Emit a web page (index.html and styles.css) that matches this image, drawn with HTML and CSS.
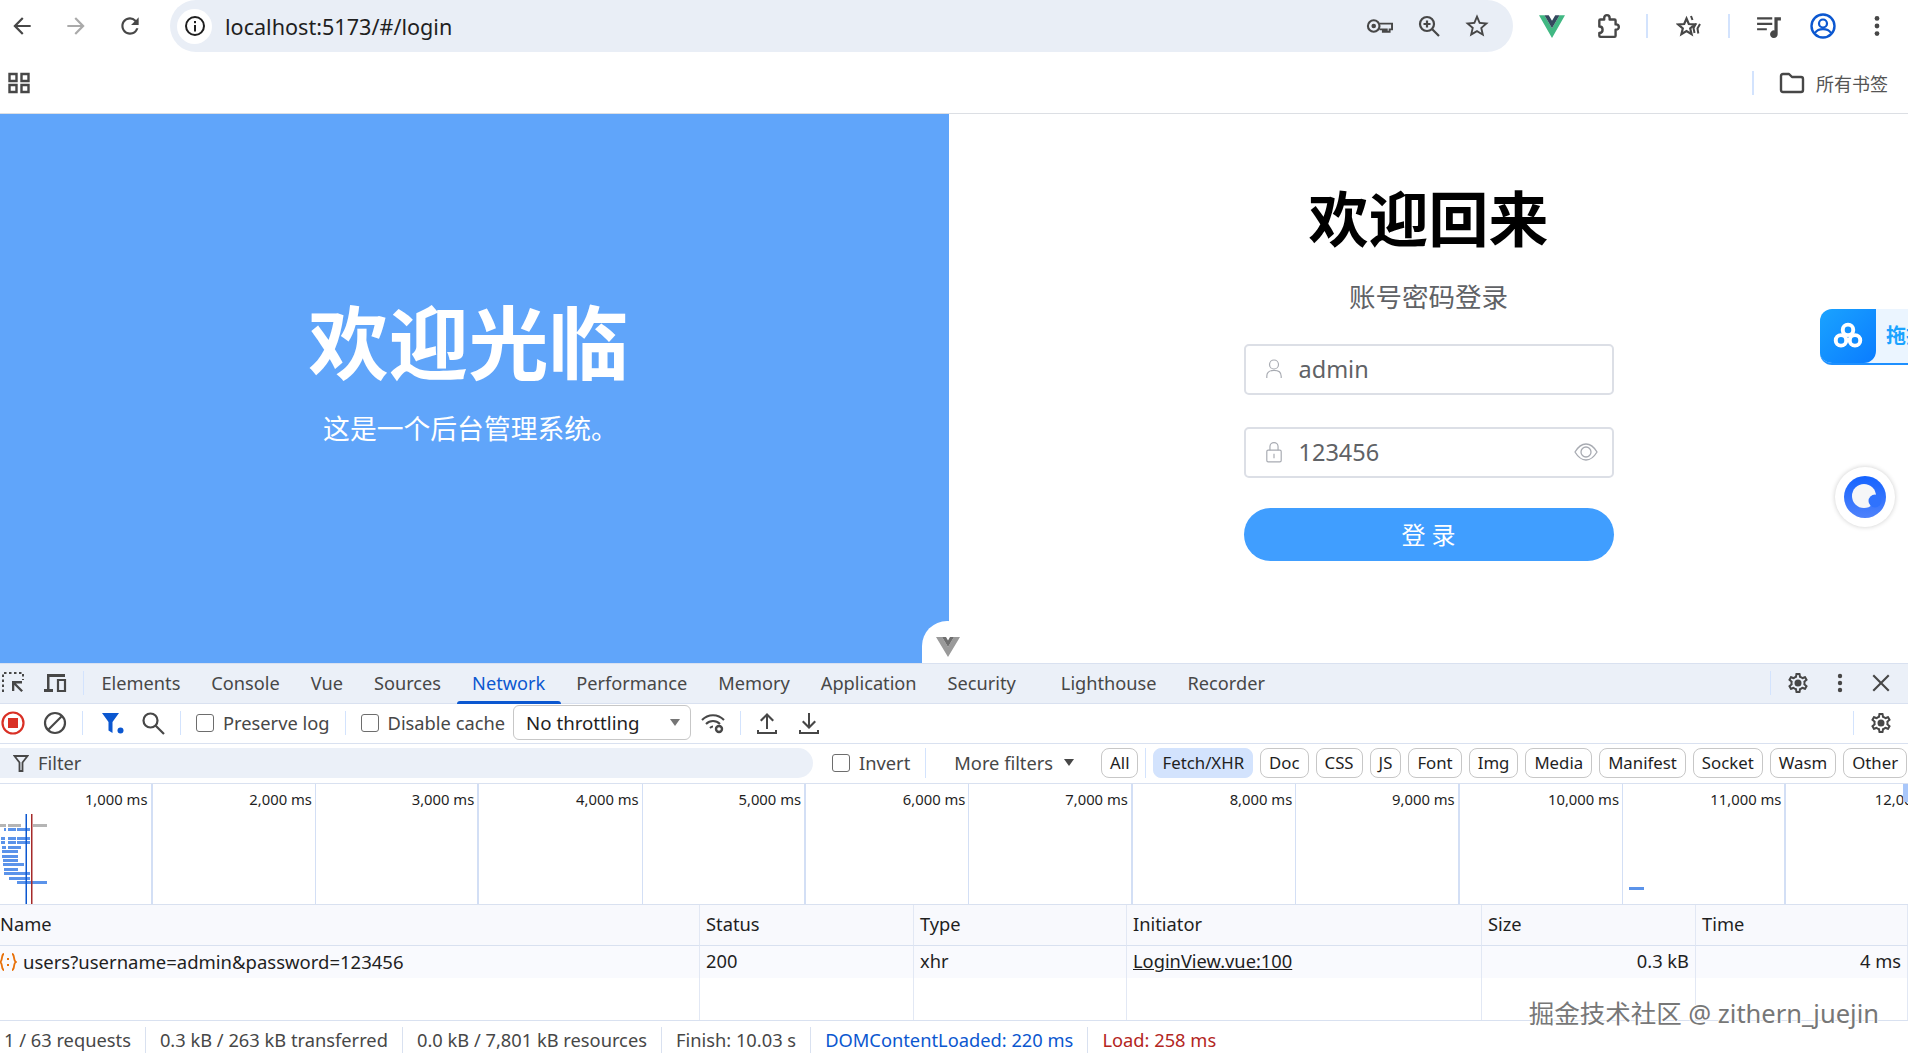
FILE: index.html
```html
<!DOCTYPE html>
<html lang="zh">
<head>
  <meta charset="UTF-8" />
  <title>localhost:5173/#/login</title>
  <link rel="stylesheet" href="styles.css" />
</head>
<body>

<svg class="sprites" width="0" height="0">
  <symbol id="gear" viewBox="0 0 24 24"><path d="M19.43 12.98c.04-.32.07-.64.07-.98 0-.34-.03-.66-.07-.98l2.11-1.65c.19-.15.24-.42.12-.64l-2-3.46a.5.5 0 0 0-.61-.22l-2.49 1c-.52-.4-1.08-.73-1.69-.98l-.38-2.65A.488.488 0 0 0 14 2h-4c-.25 0-.46.18-.49.42l-.38 2.65c-.61.25-1.17.59-1.69.98l-2.49-1a.566.566 0 0 0-.18-.03c-.17 0-.34.09-.43.25l-2 3.46c-.13.22-.07.49.12.64l2.11 1.65c-.04.32-.07.65-.07.98 0 .33.03.66.07.98l-2.11 1.65c-.19.15-.24.42-.12.64l2 3.46a.5.5 0 0 0 .61.22l2.49-1c.52.4 1.08.73 1.69.98l.38 2.65c.03.24.24.42.49.42h4c.25 0 .46-.18.49-.42l.38-2.65c.61-.25 1.17-.59 1.69-.98l2.49 1c.06.02.12.03.18.03.17 0 .34-.09.43-.25l2-3.46c.12-.22.07-.49-.12-.64l-2.11-1.65zm-1.98-1.71c.04.31.05.52.05.73 0 .21-.02.43-.05.73l-.14 1.13.89.7 1.08.84-.7 1.21-1.27-.51-1.04-.42-.9.68c-.43.32-.84.56-1.25.73l-1.06.43-.16 1.13-.2 1.35h-1.4l-.19-1.35-.16-1.13-1.06-.43c-.43-.18-.83-.41-1.23-.71l-.91-.7-1.06.43-1.27.51-.7-1.21 1.08-.84.89-.7-.14-1.13c-.03-.31-.05-.54-.05-.74s.02-.43.05-.73l.14-1.13-.89-.7-1.08-.84.7-1.21 1.27.51 1.04.42.9-.68c.43-.32.84-.56 1.25-.73l1.06-.43.16-1.13.2-1.35h1.39l.19 1.35.16 1.13 1.06.43c.43.18.83.41 1.23.71l.91.7 1.06-.43 1.27-.51.7 1.21-1.07.85-.89.7.14 1.13zM12 8.5a3.5 3.5 0 1 0 0 7 3.5 3.5 0 0 0 0-7z"/></symbol>
  <symbol id="dots" viewBox="0 0 24 24"><circle cx="12" cy="5" r="2.2"/><circle cx="12" cy="12" r="2.2"/><circle cx="12" cy="19" r="2.2"/></symbol>
</svg>

<!-- browser chrome -->
<header class="toolbar">
  <svg class="tb-icon" viewBox="0 0 24 24"><path d="M20 11H7.83l5.59-5.59L12 4l-8 8 8 8 1.41-1.41L7.83 13H20v-2z"/></svg>
  <svg class="tb-icon muted" viewBox="0 0 24 24"><path d="M12 4l-1.41 1.41L16.17 11H4v2h12.17l-5.58 5.59L12 20l8-8z"/></svg>
  <svg class="tb-icon" viewBox="0 0 24 24"><path d="M17.65 6.35A7.958 7.958 0 0 0 12 4c-4.42 0-7.99 3.58-7.99 8s3.57 8 7.99 8c3.73 0 6.84-2.55 7.73-6h-2.08A5.99 5.99 0 0 1 12 18c-3.31 0-6-2.69-6-6s2.69-6 6-6c1.66 0 3.14.69 4.22 1.78L13 11h7V4l-2.35 2.35z"/></svg>

  <div class="omnibox">
    <span class="site-info">
      <svg width="24" height="24" viewBox="0 0 24 24"><circle cx="12" cy="12" r="9" fill="none" stroke="#1f1f1f" stroke-width="2"/><rect x="11" y="11" width="2" height="6.5" fill="#1f1f1f"/><rect x="11" y="7" width="2" height="2.2" fill="#1f1f1f"/></svg>
    </span>
    <span class="url">localhost:5173/#/login</span>
    <svg class="omni-icon" viewBox="0 0 28 24"><circle cx="8" cy="12" r="6" fill="none" stroke="#474747" stroke-width="2.2"/><circle cx="8" cy="12" r="2.4" fill="#474747"/><path d="M14 9.5h13v6h-2.5v2.5h-3v-2.5h-2v2.500h-2v-2.500H14" fill="none" stroke="#474747" stroke-width="2"/></svg>
    <svg class="omni-icon zoom" viewBox="0 0 24 24"><circle cx="10" cy="10" r="7" fill="none" stroke="#474747" stroke-width="2.200"/><path d="M15 15l7 7M10 6.500v7M6.500 10h7" stroke="#474747" stroke-width="2.200"/></svg>
    <svg class="omni-icon star" viewBox="0 0 24 24"><path d="M22 9.24l-7.19-.62L12 2 9.19 8.63 2 9.24l5.46 4.73L5.82 21 12 17.27 18.18 21l-1.63-7.03L22 9.24zM12 15.4l-3.76 2.27 1-4.28-3.32-2.88 4.38-.38L12 6.1l1.71 4.04 4.38.38-3.32 2.88 1 4.28L12 15.4z"/></svg>
  </div>

  <svg class="tb-icon vue" viewBox="0 0 24 24"><path fill="#41b883" d="M0 2h5l7 12 7-12h5L12 23z"/><path fill="#34495e" d="M5 2h4l3 5.200L15 2h4l-7 12z"/></svg>
  <svg class="tb-icon puzzle" viewBox="0 0 24 24"><path fill="none" stroke="#474747" stroke-width="2.200" stroke-linejoin="round" d="M8.500 6V4.500a2.500 2.500 0 0 1 5 0V6H18c.6 0 1 .4 1 1v3.500h.5a2.500 2.500 0 0 1 0 5H19V21c0 .6-.4 1-1 1H5c-.6 0-1-.4-1-1v-2.500c2 0 3-1.300 3-3s-1-3-3-3V7c0-.6.4-1 1-1z"/></svg>
  <span class="tb-sep first"></span>
  <svg class="tb-icon star2" viewBox="0 0 26 24"><path fill="none" stroke="#474747" stroke-width="2.200" d="M10.500 4.500l2.300 5.500 5.900.5-4.500 3.900 1.400 5.800-5.100-3.100-5.100 3.100 1.400-5.800-4.500-3.900 5.900-.5z"/><path fill="none" stroke="#474747" stroke-width="2" d="M15 2l1.500 4M20 9.500l-2.500 4.500 1 5M24 10l-2.500 4.500.8 5"/></svg>
  <span class="tb-sep"></span>
  <svg class="tb-icon media" viewBox="0 0 24 24"><path d="M1 4h14v2H1zM1 9h14v2H1zM1 14h9v2H1zM17 4h6v3h-3v12.500a3.500 3.500 0 1 1-3-3.450z"/></svg>
  <svg class="tb-icon profile" viewBox="0 0 26 26"><circle cx="13" cy="13" r="11.500" fill="none" stroke="#0b57d0" stroke-width="2.400"/><circle cx="13" cy="10.500" r="4" fill="none" stroke="#0b57d0" stroke-width="2.200"/><path d="M5 20c2-3 5-3.800 8-3.800s6 .8 8 3.800" fill="none" stroke="#0b57d0" stroke-width="2.200"/></svg>
  <svg class="tb-icon kebab"><use href="#dots"/></svg>
</header>

<div class="bookmarks">
  <svg class="apps-icon" viewBox="0 0 22 22"><path fill="none" stroke="#474747" stroke-width="2.400" d="M1.500 2h7v7h-7zM13.500 2h7v7h-7zM1.500 13h7v7h-7zM13.500 13h7v7h-7z"/></svg>
  <div class="all-bookmarks">
    <span class="tb-sep"></span>
    <svg class="folder" viewBox="0 0 26 22"><path fill="none" stroke="#474747" stroke-width="2.400" stroke-linejoin="round" d="M2 4c0-1 .7-2 2-2h6l3 3h9c1.300 0 2 1 2 2v11c0 1-.7 2-2 2H4c-1.300 0-2-1-2-2z"/></svg>
    <span>所有书签</span>
  </div>
</div>

<!-- the login page -->
<main class="page">
  <section class="welcome">
    <h1>欢迎光临</h1>
    <p>这是一个后台管理系统。</p>
  </section>

  <section class="login">
    <h2>欢迎回来</h2>
    <p class="login-sub">账号密码登录</p>
    <form class="login-form">
      <label class="field">
        <svg class="field-icon" viewBox="0 0 20 24"><circle cx="10" cy="7" r="5" fill="none" stroke="#a8abb2" stroke-width="1.300"/><path d="M2 22v-2c0-4 3-6.500 8-6.500s8 2.500 8 6.500v2" fill="none" stroke="#a8abb2" stroke-width="1.300"/></svg>
        <input type="text" value="admin" />
      </label>
      <label class="field">
        <svg class="field-icon" viewBox="0 0 20 24"><rect x="2" y="10" width="16" height="13" rx="1.500" fill="none" stroke="#a8abb2" stroke-width="1.300"/><path d="M5.500 10V6a4.500 4.500 0 0 1 9 0v4M10 14v5" fill="none" stroke="#a8abb2" stroke-width="1.300"/></svg>
        <input type="text" value="123456" />
        <svg class="eye-icon" viewBox="0 0 24 20"><path d="M1 10c3-5 7-8 11-8s8 3 11 8c-3 5-7 8-11 8s-8-3-11-8z" fill="none" stroke="#a8abb2" stroke-width="1.300"/><circle cx="12" cy="10" r="5" fill="none" stroke="#a8abb2" stroke-width="1.300"/></svg>
      </label>
      <button type="button" class="login-btn">登 录</button>
    </form>
  </section>

  <!-- things injected by extensions -->
  <div class="vue-tab">
    <svg width="24" height="20" viewBox="0 0 24 20"><path fill="#9a9a9a" d="M0 0h6l6 10 6-10h6L12 20z"/><path fill="#6e6e6e" d="M6 0h4l2 3.500L14 0h4l-6 10z"/></svg>
  </div>
  <div class="cloud-widget">
    <span class="cloud-icon">
      <svg width="30" height="28" viewBox="0 0 34 32"><g fill="none" stroke="#fff" stroke-width="4.500"><circle cx="17" cy="9" r="6"/><circle cx="9" cy="21" r="6"/><circle cx="25" cy="21" r="6"/></g></svg>
    </span>
    <span class="cloud-text">拖拽上传</span>
  </div>
  <div class="round-widget">
    <svg width="42" height="42" viewBox="0 0 42 42"><defs><linearGradient id="ring" x1="0" y1="0" x2="0" y2="1"><stop offset="0" stop-color="#1463ff"/><stop offset="1" stop-color="#4f82fb"/></linearGradient></defs><circle cx="21" cy="21" r="21" fill="url(#ring)"/><circle cx="20" cy="20" r="12" fill="#f5f6f8"/><circle cx="31" cy="25" r="6.500" fill="#2f72fd"/></svg>
  </div>
</main>

<!-- devtools -->
<section class="devtools">
  <div class="dt-tabs">
    <svg class="dt-icon first" viewBox="0 0 24 24"><path fill="none" stroke="#474747" stroke-width="2" stroke-dasharray="2.500 2.500" d="M2 21V2h20v7"/><path fill="#474747" d="M11 10h10v2.400h-6l7 7-1.700 1.700-7-7V20H11z"/></svg>
    <svg class="dt-icon" viewBox="0 0 24 24"><path fill="#474747" d="M4 3h18v3H6.500v12H10v3H1v-3h3z"/><path fill="none" stroke="#474747" stroke-width="2.200" d="M15 9h7v11h-7z"/></svg>
    <span class="dt-sep"></span>
    <nav class="dt-tablist">
      <a>Elements</a>
      <a>Console</a>
      <a>Vue</a>
      <a>Sources</a>
      <a class="active">Network</a>
      <a>Performance</a>
      <a>Memory</a>
      <a>Application</a>
      <a class="wide">Security</a>
      <a>Lighthouse</a>
      <a>Recorder</a>
    </nav>
    <span class="dt-sep push"></span>
    <svg class="dt-icon gear"><use href="#gear"/></svg>
    <svg class="dt-icon kebab"><use href="#dots"/></svg>
    <svg class="dt-icon close" viewBox="0 0 24 24"><path d="M5 3.500L3.500 5l7 7-7 7L5 20.500l7-7 7 7 1.500-1.500-7-7 7-7L19 3.500l-7 7z"/></svg>
  </div>

  <div class="dt-toolbar">
    <svg class="dt-icon record" viewBox="0 0 24 24"><circle cx="12" cy="12" r="10.500" fill="none" stroke="#d93025" stroke-width="2.200"/><rect x="7" y="7" width="10" height="10" fill="#d93025"/></svg>
    <svg class="dt-icon clear" viewBox="0 0 24 24"><circle cx="12" cy="12" r="10" fill="none" stroke="#474747" stroke-width="2.200"/><path d="M5 19L19 5" stroke="#474747" stroke-width="2.200"/></svg>
    <span class="dt-sep"></span>
    <svg class="dt-icon funnel" viewBox="0 0 24 24"><path fill="#0b57d0" d="M1 2h17l-6.500 9v11l-4-2.500V11z"/><circle cx="19.500" cy="19.500" r="3" fill="#0b57d0"/></svg>
    <svg class="dt-icon search" viewBox="0 0 24 24"><circle cx="9.500" cy="9.500" r="7" fill="none" stroke="#474747" stroke-width="2.200"/><path d="M14.500 14.500L23 23" stroke="#474747" stroke-width="2.200"/></svg>
    <span class="dt-sep"></span>
    <label class="check preserve"><input type="checkbox" />Preserve log</label>
    <span class="dt-sep"></span>
    <label class="check disable"><input type="checkbox" />Disable cache</label>
    <div class="throttle"><span>No throttling</span><i class="caret"></i></div>
    <svg class="dt-icon wifi" viewBox="0 0 24 24"><path fill="none" stroke="#474747" stroke-width="2" d="M1 9c6-6.500 16-6.500 22 0M5 13c4-4 10-4 14 0M9 17c1-1 2-1.500 3-1.500"/><circle cx="18" cy="18" r="3" fill="none" stroke="#474747" stroke-width="2.400"/></svg>
    <span class="dt-sep"></span>
    <svg class="dt-icon upload" viewBox="0 0 24 24"><path fill="#474747" d="M12 2l7 7-1.500 1.500L13 6v12h-2V6l-4.500 4.500L5 9zM2 19h2v2h16v-2h2v4H2z"/></svg>
    <svg class="dt-icon download" viewBox="0 0 24 24"><path fill="#474747" d="M11 2h2v12l4.500-4.500L19 11l-7 7-7-7 1.500-1.500L11 14zM2 19h2v2h16v-2h2v4H2z"/></svg>
    <span class="dt-sep push"></span>
    <svg class="dt-icon gear"><use href="#gear"/></svg>
  </div>

  <div class="dt-filters">
    <div class="filter-box">
      <svg width="16" height="18" viewBox="0 0 16 18"><path fill="none" stroke="#474747" stroke-width="1.800" d="M1.500 2h13L9.500 8.500V17h-3V8.500z"/></svg>
      <span>Filter</span>
    </div>
    <label class="check invert"><input type="checkbox" />Invert</label>
    <span class="dt-sep short"></span>
    <span class="more-filters">More filters<i class="caret dark"></i></span>
    <div class="pills">
      <span class="pill">All</span>
      <span class="dt-sep short"></span>
      <span class="pill selected">Fetch/XHR</span>
      <span class="pill">Doc</span>
      <span class="pill">CSS</span>
      <span class="pill">JS</span>
      <span class="pill">Font</span>
      <span class="pill">Img</span>
      <span class="pill">Media</span>
      <span class="pill">Manifest</span>
      <span class="pill">Socket</span>
      <span class="pill">Wasm</span>
      <span class="pill">Other</span>
    </div>
  </div>

  <div class="overview">
    <div class="tick">1,000 ms</div>
    <div class="tick">2,000 ms</div>
    <div class="tick">3,000 ms</div>
    <div class="tick">4,000 ms</div>
    <div class="tick">5,000 ms</div>
    <div class="tick">6,000 ms</div>
    <div class="tick">7,000 ms</div>
    <div class="tick">8,000 ms</div>
    <div class="tick">9,000 ms</div>
    <div class="tick">10,000 ms</div>
    <div class="tick">11,000 ms</div>
    <div class="tick">12,000 ms</div>
    <div class="tick">13,000 ms</div>
    <!-- requests drawn on the timeline -->
    <svg class="waterfall" width="1908" height="120" viewBox="0 0 1908 120">
      <g fill="#b5b5b5"><rect x="0" y="40" width="6" height="3"/><rect x="8" y="40" width="13" height="3"/><rect x="33" y="40" width="14" height="3"/></g>
      <g fill="#5b93ea">
        <rect x="4" y="44" width="2" height="3"/><rect x="8" y="44" width="8" height="3"/><rect x="17" y="44" width="13" height="3"/>
        <rect x="1" y="53" width="4" height="3"/><rect x="8" y="53" width="8" height="3"/><rect x="17" y="53" width="13" height="3"/>
        <rect x="1" y="57" width="4" height="3"/><rect x="8" y="57" width="8" height="3"/><rect x="17" y="57" width="13" height="3"/>
        <rect x="2" y="62" width="4" height="3"/><rect x="8" y="62" width="13" height="3"/>
        <rect x="2" y="66" width="16" height="3"/>
        <rect x="2" y="71" width="16" height="3"/><rect x="3" y="75" width="15" height="3"/>
        <rect x="3" y="79" width="21" height="3"/><rect x="4" y="84" width="14" height="3"/>
        <rect x="4" y="88" width="26" height="3"/><rect x="9" y="93" width="21" height="3"/>
        <rect x="17" y="97" width="30" height="3"/>
        <rect x="1629" y="103" width="15" height="3"/>
      </g>
      <rect x="25.500" y="30" width="1.500" height="90" fill="#0b57d0"/>
      <rect x="31" y="30" width="1.500" height="90" fill="#a52a2a"/>
      <rect x="1903" y="0" width="5" height="18" fill="#a9c7fa"/>
    </svg>
  </div>

  <div class="net-table">
    <div class="th">Name</div><div class="th">Status</div><div class="th">Type</div><div class="th">Initiator</div><div class="th">Size</div><div class="th">Time</div>
    <div class="td name">
      <svg width="17" height="20" viewBox="0 0 17 20"><path fill="none" stroke="#e8710a" stroke-width="1.800" d="M4 2C1 2 3 9 0 10c3 1 1 8 4 8M12 2c3 0 1 7 4 8-3 1-1 8-4 8"/><path stroke="#e8710a" stroke-width="2" d="M8 6v2M8 12v2"/></svg>
      users?username=admin&amp;password=123456
    </div>
    <div class="td">200</div><div class="td">xhr</div>
    <div class="td"><a class="link">LoginView.vue:100</a></div>
    <div class="td num">0.3 kB</div><div class="td num">4 ms</div>
    <div class="filler"></div><div class="filler"></div><div class="filler"></div><div class="filler"></div><div class="filler"></div><div class="filler"></div>
  </div>

  <footer class="statusbar">
    <span>1 / 63 requests</span>
    <span>0.3 kB / 263 kB transferred</span>
    <span>0.0 kB / 7,801 kB resources</span>
    <span>Finish: 10.03 s</span>
    <span class="dom">DOMContentLoaded: 220 ms</span>
    <span class="load">Load: 258 ms</span>
  </footer>
</section>

<div class="watermark">掘金技术社区 @ zithern_juejin</div>

</body>
</html>
```

FILE: styles.css
```css
:root {
  --chrome-bg: #e9eef6;
  --dt-bg: #ebf0f8;
  --line: #d9e1f0;
  --sep: #d3e3fd;
  --icon: #474747;
  --text: #474747;
  --blue: #0b57d0;
}

* {
  margin: 0;
  padding: 0;
  box-sizing: border-box;
}

html, body {
  height: 100%;
  overflow: hidden;
}

body {
  display: flex;
  flex-direction: column;
  position: relative;
  background: #fff;
  color: var(--text);
  font-family: "Noto Sans", "Noto Sans CJK SC", sans-serif;
  font-size: 18.300px;
}

svg { flex: none; fill: var(--icon); }

.sprites { position: absolute; }

/* Browser toolbar */
.toolbar {
  height: 52px;
  display: flex;
  align-items: center;
  padding-left: 9px;
  flex: none;
}

.tb-icon {
  width: 26px;
  height: 26px;
  margin-right: 28px;
}

.tb-icon.muted { fill: #aaa; }

.omnibox {
  width: 1343px;
  height: 52px;
  margin-left: -1px;
  margin-right: 26px;
  padding: 0 22px 0 7px;
  display: flex;
  align-items: center;
  background: var(--chrome-bg);
  border-radius: 26px;
}

.site-info {
  width: 35px;
  height: 35px;
  display: flex;
  align-items: center;
  justify-content: center;
  background: #fff;
  border-radius: 50%;
}

.url {
  margin-left: 13px;
  font-size: 21.600px;
  color: #1f1f1f;
  flex: 1;
}

.omni-icon {
  width: 27px;
  height: 24px;
}

.omni-icon.zoom { width: 24px; margin-left: 24px; }
.omni-icon.star { width: 28px; height: 28px; margin-left: 22px; }

.tb-icon.vue { margin-right: 30px; }
.tb-icon.puzzle { margin-right: 25px; }
.tb-sep {
  width: 2px;
  height: 24px;
  background: var(--sep);
  flex: none;
}
.tb-icon.star2 { margin: 0 26px 0 28px; }
.tb-icon.media { margin-left: 26px; }
.tb-icon.kebab { margin-right: 0; }

.bookmarks {
  height: 62px;
  flex: none;
  display: flex;
  align-items: center;
  justify-content: space-between;
  padding: 0 20px 0 8px;
  border-bottom: 1px solid #dcdfe4;
}

.apps-icon { width: 22px; height: 22px; }

.all-bookmarks {
  display: flex;
  align-items: center;
  font-size: 18px;
  color: #555;
}

.folder {
  width: 26px;
  height: 22px;
  margin: 0 11px 0 25px;
}

/* Login page */
.page {
  height: 549px;
  flex: none;
  display: flex;
  position: relative;
  overflow: hidden;
}

.welcome {
  width: 949px;
  padding: 178px 12px 0 0;
  background: #60a5fa;
  color: #fff;
  text-align: center;
}

.welcome h1 {
  font-size: 80px;
  line-height: 100px;
  font-weight: 700;
}

.welcome p {
  margin: 17px 0 0 4px;
  font-size: 26.800px;
  line-height: 40px;
  font-weight: 400;
}

.login {
  flex: 1;
  padding-top: 65px;
  text-align: center;
}

.login h2 {
  font-size: 60px;
  line-height: 80px;
  font-weight: 700;
  color: #000;
}

.login-sub {
  margin-top: 18px;
  font-size: 26.500px;
  line-height: 40px;
  color: #606266;
}

.login-form {
  width: 370px;
  margin: 27px auto 0;
  display: flex;
  flex-direction: column;
}

.field {
  height: 51px;
  margin-bottom: 32px;
  padding: 0 14px 1px 19px;
  display: flex;
  align-items: center;
  border: 2px solid #dcdfe6;
  border-radius: 5px;
}

.field-icon {
  width: 18px;
  height: 22px;
  margin-right: 16px;
}

.eye-icon {
  width: 24px;
  height: 20px;
}

.field input {
  flex: 1;
  min-width: 0;
  border: none;
  outline: none;
  background: transparent;
  font: inherit;
  font-size: 23.500px;
  color: #606266;
}

.login-btn {
  height: 53px;
  margin-top: -2px;
  padding-bottom: 2px;
  border: none;
  border-radius: 27px;
  background: #409eff;
  color: #fff;
  font-family: inherit;
  font-size: 24px;
}

/* Overlays from extensions */
.vue-tab {
  position: absolute;
  left: 922px;
  bottom: 0;
  width: 51px;
  height: 42px;
  padding-top: 16px;
  text-align: center;
  background: #fff;
  border-radius: 25px 25px 0 0;
}

.cloud-widget {
  position: absolute;
  left: 1820px;
  top: 195px;
  width: 88px;
  height: 56px;
  display: flex;
  overflow: hidden;
  background: #ebf5ff;
  border-bottom: 2px solid #1e90ff;
  border-radius: 12px 0 0 12px;
}

.cloud-icon {
  width: 56px;
  flex: none;
  display: flex;
  align-items: center;
  justify-content: center;
  background: linear-gradient(135deg, #1aa3ff, #0a7cff);
  border-radius: 0 0 12px 0;
}

.cloud-text {
  margin-left: 10px;
  line-height: 54px;
  font-size: 20px;
  font-weight: 700;
  color: #1aa3ff;
  white-space: nowrap;
}

.round-widget {
  position: absolute;
  left: 1835px;
  top: 353px;
  width: 60px;
  height: 60px;
  display: flex;
  align-items: center;
  justify-content: center;
  background: #fff;
  border-radius: 50%;
  box-shadow: 0 0 5px rgba(0, 0, 0, 0.2);
}

/* Devtools */
.devtools {
  flex: 1;
  min-height: 0;
  display: flex;
  flex-direction: column;
  color: var(--text);
}

.dt-icon {
  width: 24px;
  height: 24px;
  flex: none;
}

.dt-sep {
  width: 1px;
  height: 24px;
  background: var(--sep);
  flex: none;
}

.dt-sep.short { height: 30px; }

.dt-tabs {
  height: 41px;
  flex: none;
  display: flex;
  align-items: center;
  padding: 0 15px 2px 1px;
  background: var(--dt-bg);
  border-top: 1px solid var(--line);
  border-bottom: 1px solid var(--line);
  font-size: 18.200px;
}

.dt-tabs .dt-icon + .dt-icon { margin-left: 18px; }
.dt-tabs > .dt-sep { margin-left: 16px; }

.dt-tablist {
  align-self: stretch;
  display: flex;
  margin-left: 2px;
}

.dt-tablist a {
  padding: 0 15.500px;
  display: flex;
  align-items: center;
  position: relative;
  white-space: nowrap;
}

.dt-tablist a.wide { margin-right: 14px; }

.dt-tablist a.active { color: var(--blue); }

.dt-tablist a.active::after {
  content: "";
  position: absolute;
  left: 0;
  right: 0;
  bottom: -3px;
  height: 3px;
  background: var(--blue);
  border-radius: 3px 3px 0 0;
}

.dt-tabs > .dt-sep.push { margin-left: auto; margin-right: 15px; }
.dt-tabs .dt-sep + .dt-icon.gear { margin-left: 0; }
.dt-tabs .dt-icon + .dt-icon.kebab { margin-left: 18px; }
.dt-tabs .dt-icon + .dt-icon.close { margin-left: 17px; }

.dt-toolbar {
  height: 40px;
  flex: none;
  display: flex;
  align-items: center;
  padding: 0 15px 2px 1px;
  border-bottom: 1px solid var(--line);
}

.dt-icon.clear { margin-left: 18px; }
.dt-toolbar > .dt-sep { margin-left: 15px; }
.dt-icon.funnel { margin-left: 18px; }
.dt-icon.search { margin-left: 16px; }

.check {
  display: flex;
  align-items: center;
  margin-left: 15px;
  white-space: nowrap;
}

.check input {
  appearance: none;
  width: 18px;
  height: 18px;
  margin-right: 9px;
  background: #fff;
  border: 1.500px solid #6d6d6d;
  border-radius: 3px;
}

.throttle {
  width: 178px;
  height: 35px;
  margin-left: 8px;
  padding: 0 10px 0 12px;
  display: flex;
  align-items: center;
  justify-content: space-between;
  color: #1f1f1f;
  font-size: 18.700px;
  border: 1px solid #c7c7c7;
  border-radius: 6px;
}

.caret {
  width: 0;
  height: 0;
  border-left: 5.500px solid transparent;
  border-right: 5.500px solid transparent;
  border-top: 7px solid #757575;
}

.caret.dark { border-top-color: #474747; margin-left: 11px; }

.dt-icon.wifi { margin-left: 10px; }
.dt-toolbar .dt-sep + .dt-icon.upload { margin-left: 14px; }
.dt-icon.download { margin-left: 18px; }
.dt-toolbar > .dt-sep.push { margin-left: auto; margin-right: 15px; }

.dt-filters {
  height: 40px;
  flex: none;
  display: flex;
  align-items: center;
  padding-bottom: 2px;
  border-bottom: 1px solid var(--line);
}

.filter-box {
  width: 813px;
  height: 30px;
  flex: none;
  padding-left: 13px;
  display: flex;
  align-items: center;
  gap: 9px;
  background: var(--dt-bg);
  border-radius: 0 15px 15px 0;
}

.check.invert { margin-left: 19px; }

.dt-filters > .dt-sep { margin-left: 15px; }

.more-filters {
  margin-left: 28px;
  display: flex;
  align-items: center;
  white-space: nowrap;
}

.pills {
  margin-left: 27px;
  display: flex;
  align-items: center;
  gap: 7px;
  font-size: 16.800px;
}

.pill {
  height: 30px;
  padding: 0 8px;
  display: flex;
  align-items: center;
  color: #1f1f1f;
  border: 1px solid #c7c7c7;
  border-radius: 8px;
  white-space: nowrap;
}

.pill.selected {
  background: #d3e3fd;
  border-color: #d3e3fd;
}

.overview {
  height: 121px;
  flex: none;
  display: grid;
  grid-template-columns: 152.500px repeat(12, 163.400px);
  position: relative;
  overflow: hidden;
  border-bottom: 1px solid var(--line);
}

.tick {
  padding: 5px 3px 0 0;
  text-align: right;
  font-size: 14.800px;
  color: #1f1f1f;
  white-space: nowrap;
  border-right: 1px solid #d3dff5;
}

.tick:nth-child(odd) { border-right-width: 2px; }

.waterfall {
  position: absolute;
  left: 0;
  top: 0;
}

.net-table {
  flex: 1;
  min-height: 0;
  display: grid;
  grid-template-columns: 700px 214px 213px 355px 214px 1fr;
  grid-template-rows: 41px 32px 1fr;
  border-bottom: 1px solid var(--line);
}

.th, .td, .filler { border-right: 1px solid #e2e8f4; }

.th {
  padding-left: 6px;
  line-height: 37px;
  background: #f8f9fd;
  border-bottom: 1px solid var(--line);
  color: #1f1f1f;
}

.th:first-child { padding-left: 0; }

.td {
  padding: 0 6px;
  line-height: 30px;
  background: #f9fafe;
  color: #1f1f1f;
  white-space: nowrap;
}

.td.name {
  padding-left: 0;
  display: flex;
  align-items: center;
  gap: 6px;
  font-size: 18.500px;
}

.td.num { text-align: right; }

.link { text-decoration: underline; }

.statusbar {
  height: 35px;
  flex: none;
  display: flex;
  align-items: center;
  padding-top: 2px;
}

.statusbar span {
  padding: 0 14px;
  line-height: 26px;
  border-right: 1px solid var(--line);
  white-space: nowrap;
}

.statusbar span:first-child { padding-left: 4px; }
.statusbar span:last-child { border-right: none; }
.statusbar .dom { color: #0b57d0; }
.statusbar .load { color: #b3261e; }

.watermark {
  position: absolute;
  right: 29px;
  top: 996px;
  font-size: 25.500px;
  line-height: 34px;
  color: #777;
  text-shadow: 1px 0 #fff, -1px 0 #fff, 0 1px #fff, 0 -1px #fff;
  white-space: nowrap;
}
```
